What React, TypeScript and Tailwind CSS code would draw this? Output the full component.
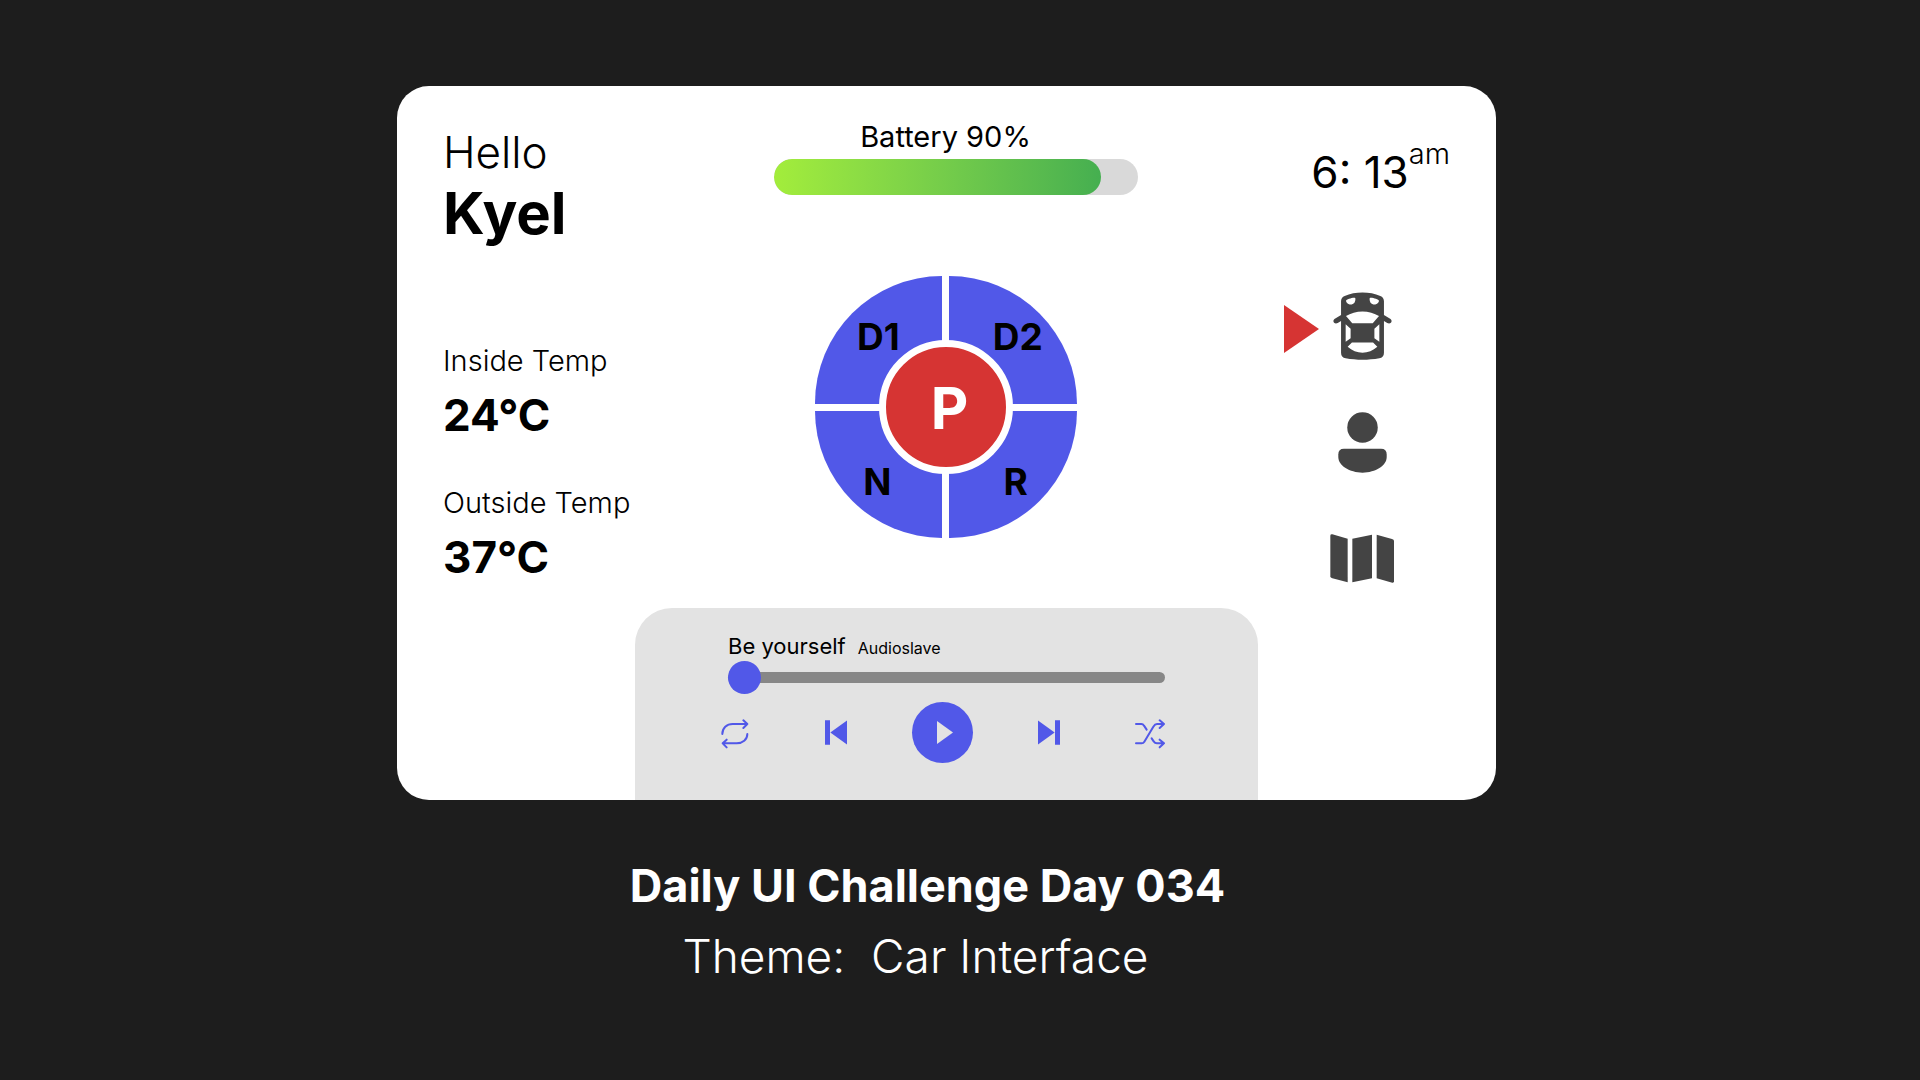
import { useState } from "react";
import type { ReactNode } from "react";

const gears = [
  { label: "D1", shape: "rounded-tl-full pb-1.5" },
  { label: "D2", shape: "rounded-tr-full pb-1.5 pl-2.5" },
  { label: "N", shape: "rounded-bl-full pt-3.5 pr-0.5" },
  { label: "R", shape: "rounded-br-full pt-3.5 pl-1.5" },
];

function CarIcon() {
  return (
    <svg viewBox="0 0 176 206" className="h-[68px] w-[59px]" fill="#444" aria-hidden="true">
      <path
        fillRule="evenodd"
        d="M23 28C23 20 27 15 34 12C66-2 110-2 142 12C149 15 153 20 153 28V70L173 82C177 85 177 90 174 93C171 96 167 96 163 94L153 88V184C153 194 148 199 139 201C106 207 70 207 37 201C28 199 23 194 23 184V88L13 94C9 96 5 96 2 93C-1 90-1 85 3 82L23 70ZM38 27C39 23 58 16 66 18C68 26 64 37 55 38C47 38 39 34 38 27ZM138 27C137 23 118 16 110 18C108 26 112 37 121 38C129 38 137 34 138 27ZM38 73C66 54 110 54 138 73L119 95H57ZM37 98L52 111V140L37 151ZM139 98V151L124 140V111ZM56 153H120L133 166C107 190 69 190 43 166Z"
      />
    </svg>
  );
}

function PersonIcon() {
  return (
    <svg viewBox="0 0 146 184" className="h-[61px] w-[49px]" fill="#444" aria-hidden="true">
      <circle cx="73" cy="47" r="46" />
      <path d="M0 128Q0 111 17 111H129Q146 111 146 128V136C146 162 112 183 73 183S0 162 0 136Z" />
    </svg>
  );
}

function MapIcon() {
  return (
    <svg viewBox="0 0 192 147" className="h-[49px] w-16" fill="#444" aria-hidden="true">
      <path d="M1 5Q1 0 7 1L53 14V145L7 133Q1 131 1 127Z" />
      <path d="M67 14L126 2V133L67 145Z" />
      <path d="M140 2L186 15Q192 17 192 21V142Q192 147 187 146L140 133Z" />
    </svg>
  );
}

function RepeatIcon() {
  return (
    <svg
      viewBox="0 0 90 96"
      className="h-8 w-[30px]"
      fill="none"
      stroke="currentColor"
      strokeWidth="6"
      strokeLinecap="round"
      strokeLinejoin="round"
      aria-hidden="true"
    >
      <path d="M7 48C7 30 20 18 38 18H82M70 7L82 18L70 30" />
      <path d="M82 48C82 65 68 76 50 76H8M20 65L8 76L20 88" />
    </svg>
  );
}

function ShuffleIcon() {
  return (
    <svg
      viewBox="0 0 90 96"
      className="h-8 w-[30px]"
      fill="none"
      stroke="currentColor"
      strokeWidth="6"
      strokeLinecap="round"
      strokeLinejoin="round"
      aria-hidden="true"
    >
      <path d="M3 18H19Q24 18 27 23L35 35" />
      <path d="M3 76H20Q25 76 28 71L55 26Q60 18 66 18H87M74 7L87 18L74 30" />
      <path d="M50 61L56 70Q60 76 66 76H87M74 65L87 76L74 88" />
    </svg>
  );
}

function SkipIcon({ back = false }: { back?: boolean }) {
  return (
    <svg viewBox="0 0 66 74" className="h-[25px] w-[22px]" fill="currentColor" aria-hidden="true">
      {back ? <path d="M0 0H15V74H0ZM66 1V73L16 37Z" /> : <path d="M51 0H66V74H51ZM0 1V73L50 37Z" />}
    </svg>
  );
}

function Temperature({ label, value }: { label: string; value: string }) {
  return (
    <div>
      <dt className="text-[29px] leading-10 font-light whitespace-nowrap">{label}</dt>
      <dd className="mt-1.5 text-[44px] leading-14 font-bold">{value}</dd>
    </div>
  );
}

function NavItem({
  label,
  active,
  onSelect,
  children,
}: {
  label: string;
  active: boolean;
  onSelect: () => void;
  children: ReactNode;
}) {
  return (
    <div className="flex items-center justify-end gap-[11px]">
      {active && (
        <svg viewBox="0 0 35 54" className="h-[54px] w-[35px]" fill="#d63433" aria-hidden="true">
          <path d="M0 6L35 30L0 54Z" />
        </svg>
      )}
      <button
        type="button"
        aria-label={label}
        aria-pressed={active}
        onClick={onSelect}
        className="flex h-[68px] w-16 items-center justify-center"
      >
        {children}
      </button>
    </div>
  );
}

export default function App() {
  const [view, setView] = useState("Car");
  const [position, setPosition] = useState(0);
  const battery = 90;

  return (
    <main className="flex min-h-screen flex-col items-center bg-[#1d1d1d] pt-[86px] pr-[27px] font-['Inter',sans-serif] text-black">
      <section className="grid w-full max-w-[1099px] grid-cols-[238px_1fr_238px] overflow-hidden rounded-[32px] bg-white">
        <div className="pt-[37px] pl-[46px]">
          <h1 className="text-[44px] leading-[58px] font-light">
            Hello
            <strong className="block text-[58px] leading-[64px] font-bold">Kyel</strong>
          </h1>
          <dl className="mt-24 flex flex-col gap-10">
            <Temperature label="Inside Temp" value="24°C" />
            <Temperature label="Outside Temp" value="37°C" />
          </dl>
        </div>

        <div className="pt-[33px]">
          <div className="flex flex-col items-center pr-0.5">
            <p className="text-[29px] leading-9">Battery {battery}%</p>
            <div className="mt-1 ml-5 h-9 w-[364px] overflow-hidden rounded-full bg-[#d9d9d9]">
              <div
                className="h-full rounded-full bg-linear-to-r from-[#a3ed3b] to-[#45af50]"
                style={{ width: `${battery}%` }}
              />
            </div>

            <div className="relative mt-[81px] grid size-[262px] grid-cols-2 grid-rows-2 gap-[7px]">
              {gears.map((gear) => (
                <button
                  key={gear.label}
                  type="button"
                  className={`flex min-h-0 items-center justify-center bg-[#5158e8] text-[37px] leading-none font-bold ${gear.shape}`}
                >
                  {gear.label}
                </button>
              ))}
              <button
                type="button"
                aria-label="P"
                className="absolute inset-0 m-auto flex size-[134px] items-center justify-center rounded-full border-7 border-white bg-[#d63433] pl-2 pt-0.5 text-[58px] leading-none font-bold text-white"
              >
                P
              </button>
            </div>
          </div>

          <div className="mt-[70px] w-full rounded-t-[37px] bg-[#e3e3e3] pt-6 pr-[83px] pb-[37px] pl-[75px]">
            <div className="mr-2.5 ml-[18px]">
              <label htmlFor="seek" className="flex items-baseline gap-3 leading-7">
                <span className="text-[22px]">Be yourself</span>
                <span className="text-base">Audioslave</span>
              </label>
              <input
                id="seek"
                type="range"
                min={0}
                max={100}
                value={position}
                onChange={(e) => setPosition(Number(e.target.value))}
                className="mt-px block h-[33px] w-full appearance-none bg-transparent [&::-webkit-slider-runnable-track]:h-[11px] [&::-webkit-slider-runnable-track]:rounded-full [&::-webkit-slider-runnable-track]:bg-[#878787] [&::-webkit-slider-thumb]:-mt-[11px] [&::-webkit-slider-thumb]:size-[33px] [&::-webkit-slider-thumb]:appearance-none [&::-webkit-slider-thumb]:rounded-full [&::-webkit-slider-thumb]:bg-[#5158e8]"
              />
            </div>
            <div className="mt-2 flex items-center justify-between text-[#5158e8]">
              <button type="button" aria-label="Repeat" className="flex w-[50px] justify-center pt-0.5">
                <RepeatIcon />
              </button>
              <button type="button" aria-label="Previous" className="flex w-[30px] justify-center">
                <SkipIcon back />
              </button>
              <button
                type="button"
                aria-label="Play"
                className="flex size-[61px] items-center justify-center rounded-full bg-[#5158e8] pl-1"
              >
                <svg viewBox="0 0 16 23" className="h-[23px] w-4" fill="#e3e3e3" aria-hidden="true">
                  <path d="M0 0L16 11.5L0 23Z" />
                </svg>
              </button>
              <button type="button" aria-label="Next" className="flex w-[30px] justify-center">
                <SkipIcon />
              </button>
              <button type="button" aria-label="Shuffle" className="flex w-[50px] justify-center pt-0.5">
                <ShuffleIcon />
              </button>
            </div>
          </div>
        </div>

        <div className="pt-[58px]">
          <div className="flex items-start justify-end pr-[46px]">
            <time dateTime="06:13" className="flex text-[44px] leading-14 whitespace-nowrap">
              6: 13<span className="text-[29px] leading-5 font-light">am</span>
            </time>
          </div>
          <nav aria-label="Views" className="mt-[92px] flex flex-col gap-12 pr-[102px]">
            <NavItem label="Car" active={view === "Car"} onSelect={() => setView("Car")}>
              <CarIcon />
            </NavItem>
            <NavItem label="Profile" active={view === "Profile"} onSelect={() => setView("Profile")}>
              <PersonIcon />
            </NavItem>
            <NavItem label="Map" active={view === "Map"} onSelect={() => setView("Map")}>
              <MapIcon />
            </NavItem>
          </nav>
        </div>
      </section>

      <footer className="mt-[51px] flex flex-col items-center pr-[38px] leading-[70px] text-white">
        <h2 className="text-[45px] font-bold">Daily UI Challenge Day 034</h2>
        <p className="pr-6 text-[46px] font-light whitespace-pre">Theme:  Car Interface</p>
      </footer>
    </main>
  );
}
